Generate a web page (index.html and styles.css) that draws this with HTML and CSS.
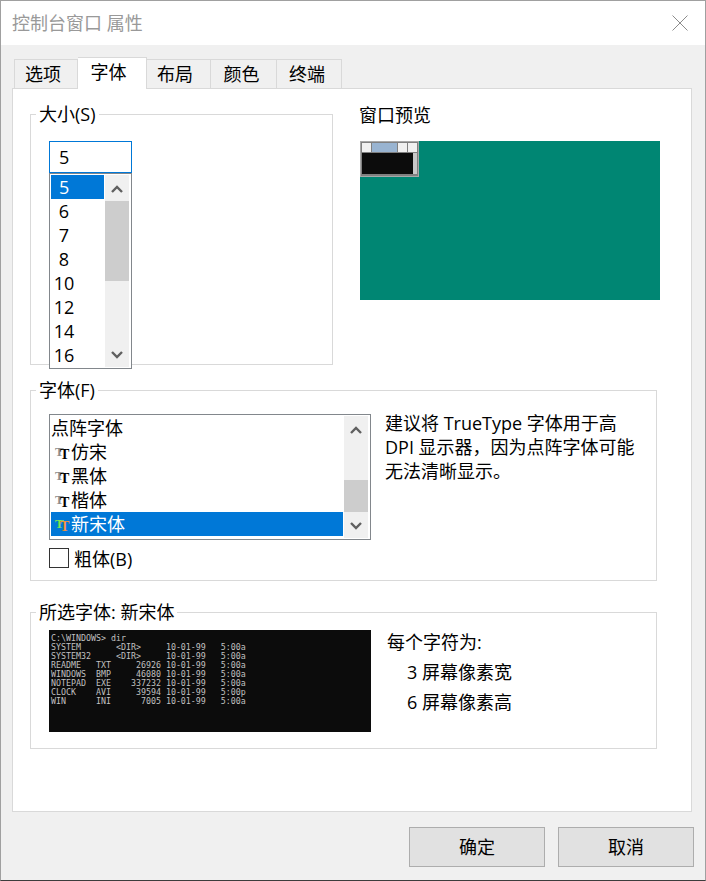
FILE: index.html
```html
<!DOCTYPE html>
<html lang="zh-CN">
<head>
    <meta charset="UTF-8">
    <title>控制台窗口 属性</title>
    <link rel="stylesheet" href="styles.css">
</head>
<body>
    <div class="window">
        <div class="titlebar">
            <span class="title">控制台窗口 属性</span>
            <svg class="close" width="16" height="16" viewBox="0 0 16 16"><path d="M.5 .5L15.5 15.5M15.5 .5L.5 15.5" stroke="#8c8c8c" fill="none"/></svg>
        </div>

        <div class="content">
            <div class="tabs">
                <div class="tab tab-first">选项</div>
                <div class="tab active">字体</div>
                <div class="tab tab-layout">布局</div>
                <div class="tab tab-color">颜色</div>
                <div class="tab tab-term">终端</div>
            </div>

            <div class="panel">
                <div class="top-row">
                    <fieldset class="group group-size">
                        <legend>大小(S)</legend>
                        <div class="size-input">5</div>
                        <div class="listbox size-list">
                            <div class="items">
                                <div class="item selected">5</div>
                                <div class="item">6</div>
                                <div class="item">7</div>
                                <div class="item">8</div>
                                <div class="item">10</div>
                                <div class="item">12</div>
                                <div class="item">14</div>
                                <div class="item">16</div>
                            </div>
                            <div class="scrollbar">
                                <div class="arrow"><svg width="12" height="8" viewBox="0 0 12 8"><path d="M1 7L6 2L11 7" stroke="#606060" stroke-width="2.4" fill="none"/></svg></div>
                                <div class="track"><div class="thumb"></div></div>
                                <div class="arrow"><svg width="12" height="8" viewBox="0 0 12 8"><path d="M1 1L6 6L11 1" stroke="#606060" stroke-width="2.4" fill="none"/></svg></div>
                            </div>
                        </div>
                    </fieldset>

                    <div class="preview">
                        <div class="preview-label">窗口预览</div>
                        <div class="screen">
                            <div class="mini">
                                <div class="mini-title">
                                    <div class="mini-btn"></div>
                                    <div class="mini-caption"></div>
                                    <div class="mini-btn"></div>
                                    <div class="mini-btn"></div>
                                </div>
                                <div class="mini-body">
                                    <div class="mini-console"></div>
                                    <div class="mini-scroll"></div>
                                </div>
                            </div>
                        </div>
                    </div>
                </div>

                <fieldset class="group group-font">
                    <legend>字体(F)</legend>
                    <div class="font-row">
                        <div class="listbox font-list">
                            <div class="items">
                                <div class="item">点阵字体</div>
                                <div class="item"><span class="tt"><span class="tt-back">T</span><span class="tt-front">T</span></span>仿宋</div>
                                <div class="item"><span class="tt"><span class="tt-back">T</span><span class="tt-front">T</span></span>黑体</div>
                                <div class="item"><span class="tt"><span class="tt-back">T</span><span class="tt-front">T</span></span>楷体</div>
                                <div class="item selected"><span class="tt"><span class="tt-back">T</span><span class="tt-front">T</span></span>新宋体</div>
                            </div>
                            <div class="scrollbar">
                                <div class="arrow"><svg width="12" height="8" viewBox="0 0 12 8"><path d="M1 7L6 2L11 7" stroke="#606060" stroke-width="2.4" fill="none"/></svg></div>
                                <div class="track"><div class="thumb"></div></div>
                                <div class="arrow"><svg width="12" height="8" viewBox="0 0 12 8"><path d="M1 1L6 6L11 1" stroke="#606060" stroke-width="2.4" fill="none"/></svg></div>
                            </div>
                        </div>
                        <p class="hint">建议将 TrueType 字体用于高<br>DPI 显示器，因为点阵字体可能<br>无法清晰显示。</p>
                    </div>
                    <div class="check-row">
                        <span class="checkbox"></span>
                        <span>粗体(B)</span>
                    </div>
                </fieldset>

                <fieldset class="group group-sample">
                    <legend>所选字体: 新宋体</legend>
                    <div class="sample-row">
<pre class="console">C:\WINDOWS&gt; dir
SYSTEM       &lt;DIR&gt;     10-01-99   5:00a
SYSTEM32     &lt;DIR&gt;     10-01-99   5:00a
README   TXT     26926 10-01-99   5:00a
WINDOWS  BMP     46080 10-01-99   5:00a
NOTEPAD  EXE    337232 10-01-99   5:00a
CLOCK    AVI     39594 10-01-99   5:00p
WIN      INI      7005 10-01-99   5:00a</pre>
                        <div class="metrics">
                            <div>每个字符为:</div>
                            <div class="metric">3 屏幕像素宽</div>
                            <div class="metric">6 屏幕像素高</div>
                        </div>
                    </div>
                </fieldset>
            </div>

            <div class="footer">
                <div class="btn">确定</div>
                <div class="btn">取消</div>
            </div>
        </div>
    </div>
</body>
</html>
```

FILE: styles.css
```css
* {
    box-sizing: border-box;
}
body {
    margin: 0;
    font-family: "Open Sans", "Noto Sans CJK SC", sans-serif;
    font-size: 18px;
    line-height: 24px;
    color: #000;
}
.window {
    width: 706px;
    height: 881px;
    display: flex;
    flex-direction: column;
    border: 1px solid #a0a0a0;
    border-bottom-color: #3c3c3c;
    background: #f0f0f0;
}
.titlebar {
    height: 44px;
    flex: none;
    display: flex;
    align-items: center;
    justify-content: space-between;
    padding: 0 17px 0 11px;
    background: #fff;
}
.title {
    color: #999;
}
.content {
    flex: 1;
    display: flex;
    flex-direction: column;
}

/* tabs */
.tabs {
    height: 43px;
    flex: none;
    display: flex;
    align-items: flex-end;
    padding-left: 13px;
}
.tab {
    height: 29px;
    width: 65px;
    padding-right: 7px;
    text-align: center;
    line-height: 29px;
    background: #f0f0f0;
    border: 1px solid #d9d9d9;
    border-left: none;
    border-bottom: none;
}
.tab-first {
    width: 64px;
    padding-right: 6px;
    border-left: 1px solid #d9d9d9;
}
.tab-layout {
    width: 64px;
}
.tab-color {
    width: 66px;
    padding-right: 4px;
}
.tab-term {
    padding-right: 4px;
}
.tab.active {
    position: relative;
    z-index: 1;
    width: 69px;
    height: 32px;
    margin-bottom: -1px;
    background: #fff;
    line-height: 29px;
}

/* main panel */
.panel {
    height: 724px;
    flex: none;
    margin: 0 13px 0 11px;
    padding: 13px 0 0 17px;
    background: #fff;
    border: 1px solid #d9d9d9;
}
.top-row {
    display: flex;
    gap: 27px;
    align-items: flex-start;
}
.group {
    margin: 0;
    min-width: 0;
    padding: 0 0 0 18px;
    border: 1px solid #d9d9d9;
}
.group legend {
    margin-left: -13px;
    padding: 0 3px;
}
.group-size {
    width: 303px;
    height: 263px;
    padding-top: 15px;
}
.group-font {
    width: 627px;
    height: 203px;
    margin-top: 13px;
    padding-top: 12px;
}
.group-sample {
    width: 627px;
    height: 149px;
    margin-top: 19px;
    padding-top: 6px;
}

/* list boxes */
.listbox {
    display: flex;
    padding: 1px;
    background: #fff;
    border: 1px solid #82878c;
}
.items {
    flex: 1;
}
.item {
    height: 24px;
    display: flex;
    align-items: center;
    white-space: nowrap;
}
.item.selected {
    background: #0078d7;
    color: #fff;
}
.scrollbar {
    width: 24px;
    margin: 0 1px;
    display: flex;
    flex-direction: column;
    background: #f0f0f0;
}
.arrow {
    height: 26px;
    flex: none;
    display: flex;
    align-items: center;
    justify-content: center;
    padding-top: 2px;
}
.track {
    flex: 1;
}
.thumb {
    background: #cdcdcd;
}
.size-input {
    width: 83px;
    height: 32px;
    padding-left: 9px;
    line-height: 30px;
    border: 1px solid #0078d7;
}
.size-list {
    width: 83px;
    height: 196px;
}
.size-list .item {
    justify-content: center;
    width: 26px;
}
.size-list .item.selected {
    width: 53px;
    justify-content: flex-start;
    padding-left: 8px;
}
.size-list .thumb {
    height: 80px;
}
.font-row {
    display: flex;
    gap: 14px;
    align-items: flex-start;
}
.font-list {
    width: 322px;
    height: 126px;
    flex: none;
}
.font-list .thumb {
    height: 32px;
    margin-top: 38px;
}
.tt {
    position: relative;
    width: 16px;
    height: 24px;
    margin: 0 0 0 4px;
    flex: none;
    font-family: "Liberation Serif", serif;
    font-weight: bold;
}
.tt-back {
    position: absolute;
    left: 0;
    top: 5px;
    font-size: 13px;
    line-height: 13px;
    color: #8c8c8c;
}
.tt-front {
    position: absolute;
    left: 5px;
    top: 8px;
    font-size: 14px;
    line-height: 14px;
    color: #000;
}
.selected .tt-back {
    color: #7fe65a;
}
.selected .tt-front {
    color: #f0913c;
}
.hint {
    margin: -3px 0 0;
    white-space: nowrap;
}
.check-row {
    display: flex;
    align-items: flex-start;
    gap: 5px;
    margin-top: 7px;
}
.checkbox {
    width: 20px;
    height: 20px;
    margin-top: 1px;
    border: 1px solid #333;
    background: #fff;
}

/* window preview */
.preview-label {
    margin-top: 1px;
    margin-left: -1px;
}
.screen {
    width: 300px;
    height: 159px;
    margin-top: 14px;
    background: #008673;
}
.mini {
    width: 59px;
    height: 36px;
    padding: 1px;
    background: #808080;
    border: 1px solid #a8a8a8;
}
.mini-title {
    height: 9px;
    display: flex;
    gap: 1px;
    margin: 0 0 1px;
}
.mini-btn {
    width: 9px;
    background: #f0f0f0;
}
.mini-caption {
    flex: 1;
    background: #99b4d1;
}
.mini-body {
    height: 21px;
    display: flex;
}
.mini-console {
    flex: 1;
    background: #0c0c0c;
}
.mini-scroll {
    width: 4px;
    background: #c8c8c8;
}

/* selected font sample */
.sample-row {
    display: flex;
    gap: 16px;
    align-items: flex-start;
}
.console {
    width: 322px;
    height: 102px;
    flex: none;
    margin: 0;
    padding: 4px 2px;
    background: #0c0c0c;
    color: #c0c0c0;
    font-family: "DejaVu Sans Mono", monospace;
    font-size: 8.3px;
    line-height: 9px;
}
.metrics {
    margin-top: -3px;
    line-height: 30px;
}
.metric {
    padding-left: 20px;
}

/* buttons */
.footer {
    flex: 1;
    display: flex;
    justify-content: flex-end;
    gap: 13px;
    padding: 15px 11px 0 0;
}
.btn {
    width: 136px;
    height: 40px;
    line-height: 38px;
    text-align: center;
    background: #e1e1e1;
    border: 1px solid #adadad;
}
```
